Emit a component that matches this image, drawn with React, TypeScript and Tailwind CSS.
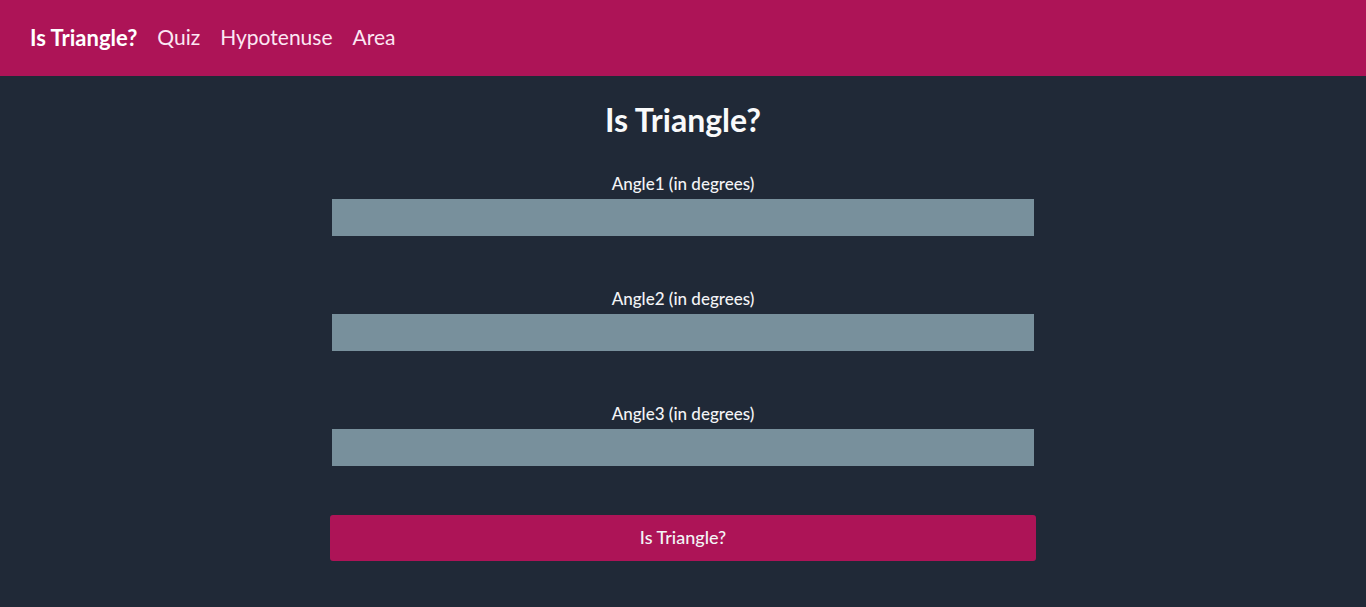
const links = ['Quiz', 'Hypotenuse', 'Area'];
const angles = ['Angle1', 'Angle2', 'Angle3'];

export default function App() {
  return (
    <div className="min-h-screen bg-[#202937] font-['Lato','Noto_Sans',sans-serif] text-gray-100">
      <nav className="flex h-19 items-center gap-5 bg-[#ad1457] px-[30px] pb-0.5 text-[21px] text-pink-100">
        <a href="#triangle" aria-current="page" className="text-[22px] font-bold text-white">Is Triangle?</a>
        {links.map((name) => (
          <a key={name} href={`#${name.toLowerCase()}`}>{name}</a>
        ))}
      </nav>
      <main className="mx-auto w-full max-w-[706px] pt-5 text-center">
        <h1 className="text-[32px] leading-[48px] font-bold text-gray-50">Is Triangle?</h1>
        <form className="mt-7" onSubmit={(event) => event.preventDefault()}>
          <div className="flex flex-col gap-[49px]">
            {angles.map((name) => (
              <div key={name} className="flex flex-col">
                <label htmlFor={name} className="mb-px text-[17px] leading-6 font-medium">{name} (in degrees)</label>
                <input
                  id={name}
                  type="number"
                  className="h-[41px] w-full border-2 border-[#202937] bg-[#78909c] bg-clip-padding px-2 text-center outline-none"
                />
              </div>
            ))}
          </div>
          <button type="submit" className="mt-[47px] h-[46px] w-full rounded-[3px] bg-[#ad1457] pb-0.5 text-lg font-medium">Is Triangle?</button>
        </form>
      </main>
    </div>
  );
}
